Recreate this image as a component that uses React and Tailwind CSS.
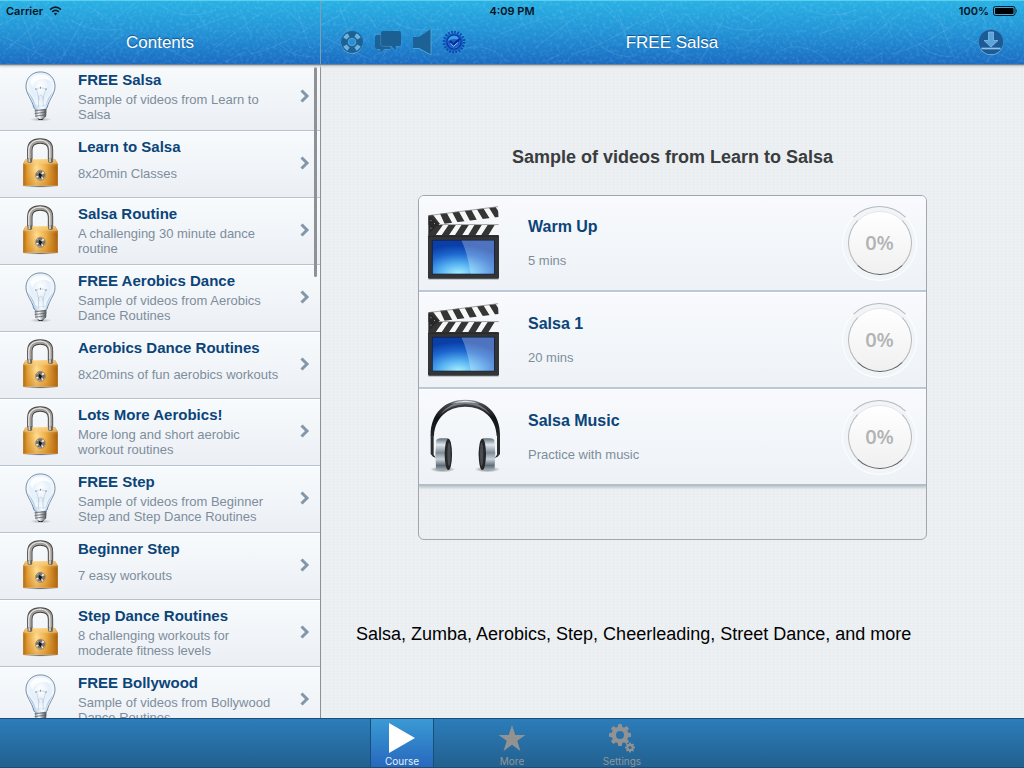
import React from "react";

const courses = [
  { title: "FREE Salsa", text: "Sample of videos from Learn to Salsa", free: true },
  { title: "Learn to Salsa", text: "8x20min Classes" },
  { title: "Salsa Routine", text: "A challenging 30 minute dance routine" },
  { title: "FREE Aerobics Dance", text: "Sample of videos from Aerobics Dance Routines", free: true },
  { title: "Aerobics Dance Routines", text: "8x20mins of fun aerobics workouts" },
  { title: "Lots More Aerobics!", text: "More long and short aerobic workout routines" },
  { title: "FREE Step", text: "Sample of videos from Beginner Step and Step Dance Routines", free: true },
  { title: "Beginner Step", text: "7 easy workouts" },
  { title: "Step Dance Routines", text: "8 challenging workouts for moderate fitness levels" },
  { title: "FREE Bollywood", text: "Sample of videos from Bollywood Dance Routines", free: true },
];

const lessons = [
  { title: "Warm Up", text: "5 mins", Icon: Clapper },
  { title: "Salsa 1", text: "20 mins", Icon: Clapper },
  { title: "Salsa Music", text: "Practice with music", Icon: Headphones },
];

function Defs() {
  return (
    <svg width="0" height="0" className="absolute" aria-hidden="true">
      <defs>
        <radialGradient id="glass" cx="50%" cy="38%" r="60%">
          <stop offset="0" stopColor="#ffffff" />
          <stop offset="0.5" stopColor="#e3effa" />
          <stop offset="0.8" stopColor="#f3f8fd" />
          <stop offset="1" stopColor="#a9c8e8" />
        </radialGradient>
        <linearGradient id="glassLow" x1="0" x2="1">
          <stop offset="0" stopColor="#6f9fd0" />
          <stop offset="0.35" stopColor="#cfe2f5" />
          <stop offset="0.6" stopColor="#ffffff" />
          <stop offset="1" stopColor="#6796c8" />
        </linearGradient>
        <linearGradient id="metal" x1="0" x2="1">
          <stop offset="0" stopColor="#8d9299" />
          <stop offset="0.35" stopColor="#ffffff" />
          <stop offset="0.6" stopColor="#b4b8bd" />
          <stop offset="1" stopColor="#44484d" />
        </linearGradient>
        <linearGradient id="brass" x1="0" x2="1">
          <stop offset="0" stopColor="#a8640f" />
          <stop offset="0.12" stopColor="#e09c35" />
          <stop offset="0.38" stopColor="#ffdf95" />
          <stop offset="0.65" stopColor="#eeb04a" />
          <stop offset="1" stopColor="#a45a08" />
        </linearGradient>
        <linearGradient id="brassShade" x1="0" x2="0" y1="0" y2="1">
          <stop offset="0" stopColor="#ffe3a0" stopOpacity="0.7" />
          <stop offset="0.3" stopColor="#e59a20" stopOpacity="0" />
          <stop offset="1" stopColor="#c47410" stopOpacity="0.45" />
        </linearGradient>
        <radialGradient id="screen" cx="42%" cy="100%" r="85%">
          <stop offset="0" stopColor="#a9f1ff" />
          <stop offset="0.35" stopColor="#58b4f2" />
          <stop offset="0.7" stopColor="#1e68d0" />
          <stop offset="1" stopColor="#0b3fa8" />
        </radialGradient>
        <linearGradient id="band" x1="0" x2="0" y1="0" y2="1">
          <stop offset="0" stopColor="#9da3a8" />
          <stop offset="0.12" stopColor="#42464a" />
          <stop offset="0.5" stopColor="#111213" />
          <stop offset="1" stopColor="#222426" />
        </linearGradient>
        <linearGradient id="cup" x1="0" x2="0" y1="0" y2="1">
          <stop offset="0" stopColor="#64707b" />
          <stop offset="0.2" stopColor="#dfe6ec" />
          <stop offset="0.45" stopColor="#7f8c98" />
          <stop offset="0.65" stopColor="#c7d1d9" />
          <stop offset="0.85" stopColor="#5f6c78" />
          <stop offset="1" stopColor="#a8b2ba" />
        </linearGradient>
        <radialGradient id="ground">
          <stop offset="0" stopColor="#3d4247" stopOpacity="0.8" />
          <stop offset="1" stopColor="#3d4247" stopOpacity="0" />
        </radialGradient>
        <clipPath id="slateTop">
          <path d="M40 74L250 48L252 79L76 101L70 103L40 103Z" />
        </clipPath>
        <clipPath id="slateBar">
          <path d="M40 103H252V134H40Z" />
        </clipPath>
        <filter id="grain" x="0" y="0" width="100%" height="100%">
          <feTurbulence type="fractalNoise" baseFrequency="0.3" numOctaves="3" seed="7" />
          <feColorMatrix values="0 0 0 0 0.75  0 0 0 0 0.95  0 0 0 0 1  1.6 0 0 0 -0.72" />
        </filter>
        <pattern id="scratches" width="320" height="66" patternUnits="userSpaceOnUse">
          <g fill="none" stroke="#c8f2ff" strokeWidth="0.7" opacity="0.17">
            <path d="M4 52L47 14L58 30M2 36Q30 50 52 60M20 8L34 48M60 62L84 18M71 20Q92 34 122 29M88 6L112 22L135 3M102 50L124 34M135 54Q160 36 189 62M160 5Q184 22 216 10M180 34L228 16M194 6L207 30M215 48L262 12M240 9L252 38M251 54Q280 48 318 22M264 25Q285 60 314 56M281 5L306 28M0 25Q20 18 31 2M28 60L48 38M225 62L244 52M298 13L310 48" />
          </g>
        </pattern>
      </defs>
    </svg>
  );
}

function Bulb() {
  return (
    <svg viewBox="70 12 100 156" className="h-[52px] w-[33px]" aria-hidden="true">
      <ellipse cx="121" cy="161" rx="34" ry="6" fill="url(#ground)" opacity="0.5" />
      <path d="M120 17C93 17 76 37 76 61C76 84 93 97 100 126Q102 132 120 132Q138 132 140 126C147 97 164 84 164 61C164 37 147 17 120 17Z" fill="url(#glass)" stroke="#5f7791" strokeWidth="2.5" />
      <path d="M80 73C90 92 98 102 103 127Q120 133 137 127C142 102 150 92 160 73C150 91 139 96 134 120H106C102 97 89 89 80 73Z" fill="url(#glassLow)" opacity="0.95" />
      <path d="M88 45Q98 22 124 25Q147 28 153 46Q138 35 121 39Q101 43 95 62Z" fill="#fff" opacity="0.85" />
      <path d="M107 70Q120 60 136 70M108 70L116 102M136 70L126 102M114 124V92Q120 84 128 92V124" fill="none" stroke="#b9c8d6" strokeWidth="2" />
      <path d="M106 66v6M120 62v6M137 66v6" stroke="#616b76" strokeWidth="2" />
      <path d="M103 130H138L137 152Q130 160 120 160Q110 160 104 152Z" fill="url(#metal)" />
      <path d="M102 135L138 131M102 143L138 139M104 151L137 147" stroke="#5c6268" strokeWidth="2.4" />
      <path d="M110 156Q120 165 131 156L126 163H115Z" fill="#272a2d" />
    </svg>
  );
}

function Lock() {
  return (
    <svg viewBox="66 216 110 150" className="h-[50px] w-[37px]" aria-hidden="true">
      <ellipse cx="121" cy="361" rx="54" ry="4" fill="url(#ground)" />
      <path d="M89 290V252Q89 225 120 225Q151 225 151 252V290" fill="none" stroke="#45423f" strokeWidth="16" />
      <path d="M89 290V252Q89 225 120 225Q151 225 151 252V290" fill="none" stroke="#a19d9a" strokeWidth="11" />
      <path d="M86 290V251Q88 224 120 222Q148 224 149 251V290" fill="none" stroke="#eeeeed" strokeWidth="3.5" />
      <path d="M76 280H165L173 293V359H69V293Z" fill="url(#brass)" />
      <path d="M76 280H165L173 293V359H69V293Z" fill="url(#brassShade)" />
      <path d="M76 281H165L172 293H70Z" fill="#f6cc7c" opacity="0.55" />
      <path d="M82 277H96V289Q89 293 82 289ZM144 277H158V289Q151 293 144 289Z" fill="#6b6259" />
      <path d="M85 277H90V289H85ZM147 277H152V289H147Z" fill="#d7d3cf" />
      <circle cx="121" cy="328" r="15" fill="#efe8df" stroke="#8b6b3c" strokeWidth="2" />
      <path d="M121 328L112 317Q121 311 128 316ZM121 328L134 321Q137 331 131 338ZM121 328L126 341Q115 343 110 336ZM121 328L107 331Q106 322 111 319Z" fill="#77736f" />
      <path d="M116 320L126 326L122 337L115 331Z" fill="#171513" />
    </svg>
  );
}

function Clapper() {
  return (
    <svg viewBox="36 46 220 226" className="h-[75px] w-[73px]" aria-hidden="true">
      <rect x="39" y="262" width="214" height="6" rx="3" fill="#8e9499" opacity="0.6" />
      <path d="M40 74L250 48L252 79L76 101L70 103L40 103Z" fill="#f7f7f7" />
      <g clipPath="url(#slateTop)" fill="#353535">
        <path d="M34 70L54 72L76 101L38 106ZM74 66L94 64L113 99L90 102ZM110 61L130 59L150 94L129 97ZM148 57L168 54L187 90L166 92ZM184 52L204 50L226 85L205 87ZM221 48L240 45L262 79L242 82Z" />
      </g>
      <path d="M40 103H252V134H40Z" fill="#f7f7f7" />
      <g clipPath="url(#slateBar)" fill="#353535">
        <path d="M60 103H84L62 134H38ZM101 103H123L102 134H80ZM140 103H162L142 134H120ZM179 103H201L182 134H160ZM219 103H240L221 134H199Z" />
      </g>
      <path d="M40 76L50 82L73 101L55 115L40 134Z" fill="#292929" />
      <path d="M47 90h2M58 99h2M47 113h2" stroke="#ddd" strokeWidth="3" />
      <path d="M40 75L250 48M74 102H252" stroke="#777" strokeWidth="2" />
      <rect x="39" y="134" width="214" height="131" rx="4" fill="#333436" />
      <path d="M40 136H252" stroke="#141414" strokeWidth="3" />
      <rect x="52" y="149" width="187" height="102" fill="url(#screen)" stroke="#111d38" strokeWidth="2" />
      <path d="M140 150H238V250H168Q158 188 140 150Z" fill="#fff" opacity="0.28" />
    </svg>
  );
}

function Headphones() {
  return (
    <svg viewBox="37 58 219 225" className="h-[75px] w-[73px] overflow-visible" aria-hidden="true">
      <ellipse cx="84" cy="266" rx="38" ry="9" fill="url(#ground)" />
      <ellipse cx="218" cy="266" rx="38" ry="9" fill="url(#ground)" />
      <path d="M48 165C47 96 92 57 152 57C212 57 257 96 256 165L246 166C244 113 206 78 152 78C98 78 60 113 58 166Z" fill="url(#band)" />
      <path d="M75 103Q105 64 152 62Q199 64 229 103Q199 72 152 70Q105 72 75 103Z" fill="#777d82" />
      <path d="M110 69Q152 51 194 69Q152 61 110 69Z" fill="#e1e5e8" />
      <path d="M48 162H57V222L64 232L55 228L48 220ZM247 162H256V220L249 228L240 232L247 222Z" fill="#2b2d2f" />
      <path d="M65 178Q68 173 78 173H99Q111 178 112 220Q111 264 99 269H75Q66 269 64 262Q60 220 65 178Z" fill="url(#cup)" />
      <path d="M239 178Q236 173 226 173H205Q193 178 192 220Q193 264 205 269H229Q238 269 240 262Q244 220 239 178Z" fill="url(#cup)" />
      <ellipse cx="101" cy="221" rx="11" ry="47" fill="#252628" />
      <ellipse cx="203" cy="221" rx="11" ry="47" fill="#252628" />
      <ellipse cx="103" cy="221" rx="5" ry="36" fill="#4b4e51" />
      <ellipse cx="201" cy="221" rx="5" ry="36" fill="#4b4e51" />
    </svg>
  );
}

function Chevron() {
  return (
    <svg viewBox="0 0 10 14" className="h-[14px] w-[10px] shrink-0" aria-hidden="true">
      <path d="M1.500 1.500L7 7L1.500 12.500" fill="none" stroke="#8397aa" strokeWidth="3" />
    </svg>
  );
}

function Wifi() {
  return (
    <svg viewBox="0 0 13 10" className="h-[10px] w-[13px]" aria-hidden="true">
      <path d="M1 3.600Q6.500 -1.200 12 3.600M3.100 5.900Q6.500 2.900 9.900 5.900" fill="none" stroke="#0a1a26" strokeWidth="1.600" />
      <path d="M4.800 7.500Q6.500 6 8.200 7.500L6.500 9.500Z" fill="#0a1a26" />
    </svg>
  );
}

function Battery() {
  return (
    <svg viewBox="0 0 25 10" className="h-[10px] w-[25px]" aria-hidden="true">
      <rect x="0.500" y="0.500" width="21.500" height="9" rx="2" fill="none" stroke="#0a1a26" />
      <rect x="2" y="2" width="18.500" height="6" rx="0.800" fill="#000" />
      <path d="M23.200 3Q24.800 5 23.200 7Z" fill="#0a1a26" />
    </svg>
  );
}

function LifeRing() {
  return (
    <svg viewBox="0 0 24 24" className="size-6" aria-hidden="true">
      <circle cx="12" cy="12.700" r="11" fill="#8cc8ee" opacity="0.6" />
      <circle cx="12" cy="12" r="11" fill="#1c6296" />
      <circle cx="12" cy="12" r="3.800" fill="#2b90d2" stroke="#7bbbe4" strokeWidth="0.600" />
      <g fill="#6fb4e0">
        {[45, 135, 225, 315].map((a) => (
          <path key={a} transform={`rotate(${a} 12 12)`} d="M9 2.600Q12 1.800 15 2.600L14 6.600Q12 6 10 6.600Z" />
        ))}
      </g>
    </svg>
  );
}

function Chat() {
  return (
    <svg viewBox="0 0 28 26" className="h-[26px] w-7" aria-hidden="true">
      <path d="M3 6H16V20H10L6 25V20H3Q1 20 1 18V8Q1 6 3 6Z" fill="#1c6296" />
      <path d="M9 2H25Q27 2 27 4V15Q27 17 25 17H22V22L17 17H9Q7 17 7 15V4Q7 2 9 2Z" fill="#1c5f93" />
      <path d="M6.700 6V15Q7 17.300 9 17.300H17L22 22.500V17.500H25M3 20.500H6V25L10 20.500H16" fill="none" stroke="#67b1e0" strokeWidth="0.500" opacity="0.7" />
    </svg>
  );
}

function Speaker() {
  return (
    <svg viewBox="0 0 20 28" className="h-7 w-5" aria-hidden="true">
      <path d="M1 9H7L19 1V27L7 20H1Z" fill="#1c6296" />
      <path d="M1 20.500H7L19 27V1" fill="none" stroke="#67b1e0" strokeWidth="0.700" />
    </svg>
  );
}

function Seal() {
  return (
    <svg viewBox="0 0 24 24" className="size-6" aria-hidden="true">
      <circle cx="12" cy="12" r="10" fill="none" stroke="#0c46b0" strokeWidth="2.600" strokeDasharray="1.600 1.540" />
      <circle cx="12" cy="12" r="9" fill="#1560c2" />
      <circle cx="12" cy="12" r="7" fill="#3aa0e6" stroke="#0a2f9a" strokeWidth="1.200" />
      <path d="M5.500 11Q12 7 18.500 11A6.500 6.500 0 0 1 5.500 12Z" fill="#1a5fcb" />
      <path d="M8 11L11.400 14.800L17.500 9" fill="none" stroke="#0a2a94" strokeWidth="2.400" />
      <path d="M8.600 13.200L11.400 16.400L15.800 12.600" fill="none" stroke="#8fd0fa" strokeWidth="1" />
    </svg>
  );
}

function Download() {
  return (
    <svg viewBox="0 0 26 28" className="h-7 w-[26px]" aria-hidden="true">
      <circle cx="13" cy="14.800" r="12.300" fill="#7cbbe8" />
      <circle cx="13" cy="14" r="12.300" fill="#1c5b96" />
      <path d="M10.500 4H15.500V12.500H20L13 19L6 12.500H10.500Z" fill="#5aa5dc" stroke="#8cc4ec" strokeWidth="0.700" />
      <path d="M3.500 20.500H22.500" stroke="#8cc4ec" strokeWidth="1.700" />
    </svg>
  );
}

function Gear({ cx, cy, r, hole }) {
  return (
    <g transform={`translate(${cx} ${cy})`}>
      <circle r={(r * 0.76 + hole) / 2} fill="none" stroke="#929292" strokeWidth={r * 0.76 - hole} />
      {[0, 45, 90, 135, 180, 225, 270, 315].map((a) => (
        <path key={a} transform={`rotate(${a})`} fill="#929292" d={`M${-r * 0.22} ${-r * 0.68}L${-r * 0.15} ${-r}H${r * 0.15}L${r * 0.22} ${-r * 0.68}Z`} />
      ))}
    </g>
  );
}

const iconButton = "flex items-center justify-center";

function Header() {
  return (
    <header className="relative z-10 h-16 shrink-0 bg-linear-to-b from-[#29b2e4] via-[#2393d6] to-[#1b6cc2] shadow-[0_1px_0_#77848f,0_2px_0_#b9c0c6,0_3px_2px_#d3d8dc]">
      <svg className="absolute inset-0 h-full w-full" aria-hidden="true">
        <rect width="100%" height="100%" fill="url(#scratches)" />
        <rect width="100%" height="100%" filter="url(#grain)" opacity="0.2" />
      </svg>
      <div className="absolute inset-y-0 left-80 w-px bg-[#7d9db4]" />
      <div className="absolute inset-x-0 top-0 h-px bg-[#5dcdf0]" />
      <div className="relative grid h-[22px] grid-cols-3 items-center px-[6px] font-['Inter',sans-serif] text-[11px] font-semibold text-[#06141f]">
        <div className="flex items-center gap-[6px]">
          <span>Carrier</span>
          <Wifi />
        </div>
        <div className="text-center">4:09 PM</div>
        <div className="flex items-center justify-end gap-1">
          <span>100%</span>
          <Battery />
        </div>
      </div>
      <div className="relative flex h-10 items-center text-[17px] text-white [text-shadow:0_-1px_1px_rgba(0,40,90,0.6)]">
        <h2 className="w-80 shrink-0 pt-[2px] text-center">Contents</h2>
        <div className="grid flex-1 grid-cols-[1fr_auto_1fr] items-center pr-5 pl-5">
          <div className="flex items-center gap-[10px] pb-px">
            <button type="button" aria-label="Help" className={iconButton}><LifeRing /></button>
            <button type="button" aria-label="Messages" className={iconButton}><Chat /></button>
            <button type="button" aria-label="Sound" className={iconButton}><Speaker /></button>
            <button type="button" aria-label="Verified" className={iconButton}><Seal /></button>
          </div>
          <h1 className="pt-[2px]">FREE Salsa</h1>
          <div className="flex justify-end">
            <button type="button" aria-label="Download" className={iconButton}><Download /></button>
          </div>
        </div>
      </div>
    </header>
  );
}

function Sidebar() {
  return (
    <nav aria-label="Contents" className="relative w-80 shrink-0 overflow-hidden">
      <ul>
        {courses.map((c) => (
          <li key={c.title} className="h-[67px] border-b border-[#b4c3ce] bg-linear-to-b from-[#f8fbfd] to-[#ebeff4]">
            <a href="#course" className="flex h-full items-center border-t border-white pr-[10px] pb-[3px]">
              <span className="flex w-[78px] shrink-0 justify-center pl-[2px]">{c.free ? <Bulb /> : <Lock />}</span>
              <span className="flex min-w-0 flex-1 flex-col gap-px">
                <span className="h-5 text-[15px] leading-5 font-bold text-[#0b4479]">{c.title}</span>
                <span className="flex h-8 max-w-[204px] items-center text-[13px] leading-[15px] text-[#7e8d9c]">{c.text}</span>
              </span>
              <Chevron />
            </a>
          </li>
        ))}
      </ul>
      <div className="absolute top-[3px] right-[3px] h-[210px] w-[3px] rounded-full bg-[#8e9297]" />
    </nav>
  );
}

function Lesson({ title, text, Icon }) {
  return (
    <li className="h-[97px] border-b-2 border-[#b9cad6] bg-linear-to-b from-[#f8fafd] to-[#eef2f6] last:border-[#b3bfc8] last:shadow-[0_2px_2px_#c5cbd0]">
      <a href="#lesson" className="flex h-full items-center border-t border-white pr-[9px] pl-2">
        <Icon />
        <span className="ml-7 flex min-w-0 flex-1 flex-col gap-[14px] pt-[2px]">
          <span className="text-[16px] leading-5 font-bold text-[#0b4479]">{title}</span>
          <span className="text-[13px] leading-5 text-[#7e8d9c]">{text}</span>
        </span>
        <span className="flex size-[75px] items-center justify-center rounded-full border border-[#fdfefe] border-t-[#b4b9be] bg-[#f2f5f8]">
          <span className="flex size-16 items-center justify-center rounded-full border border-[#b5b8bb] border-t-[#e3e5e7] border-b-[#5b5d60] bg-linear-to-b from-white to-[#f0f0f1] font-['Open_Sans',sans-serif] text-[20px] font-semibold text-[#b1b2b4]">
            0%
          </span>
        </span>
      </a>
    </li>
  );
}

function TabBar() {
  const tab = "flex h-full w-[62px] flex-col items-center justify-end text-[10px] leading-3";
  return (
    <footer className="relative z-10 flex h-[50px] shrink-0 justify-center gap-12 border-y border-[#174f78] bg-linear-to-b from-[#2c7dba] to-[#22608f] font-['Inter',sans-serif]">
      <button type="button" className={`${tab} bg-linear-to-b from-[#3b9ad4] to-[#2868bd] text-[#e6f1fb] shadow-[0_0_0_1px_#174f78]`}>
        <svg viewBox="0 0 36 36" className="size-9" aria-hidden="true">
          <path d="M5 4L31 19L5 34Z" fill="#fff" />
        </svg>
        Course
      </button>
      <button type="button" className={`${tab} text-[#929699]`}>
        <svg viewBox="0 0 36 36" className="size-9" aria-hidden="true">
          <path d="M18 6L21.300 16H31.500L23.300 21.800L26.400 32L18 25.800L9.600 32L12.700 21.800L4.500 16H14.700Z" fill="#929292" />
        </svg>
        More
      </button>
      <button type="button" className={`${tab} text-[#929699]`}>
        <svg viewBox="0 0 36 36" className="size-9" aria-hidden="true">
          <Gear cx={16} cy={16} r={11} hole={4} />
          <Gear cx={26} cy={28.500} r={5} hole={1.600} />
        </svg>
        Settings
      </button>
    </footer>
  );
}

export default function App() {
  return (
    <div className="flex h-screen flex-col overflow-hidden bg-[#ebeff2] font-['Liberation_Sans',Arial,sans-serif]">
      <Defs />
      <Header />
      <div className="flex min-h-0 flex-1">
        <Sidebar />
        <main className="flex-1 overflow-hidden border-l border-[#8c9298] bg-[repeating-linear-gradient(0deg,rgba(255,255,255,0.15)_0_1px,transparent_1px_3px),repeating-linear-gradient(90deg,rgba(190,202,212,0.08)_0_1px,transparent_1px_4px)] px-[35px] pt-20">
          <h2 className="text-center text-[18px] leading-[26px] font-bold text-[#3a3c3e]">Sample of videos from Learn to Salsa</h2>
          <section className="mx-auto mt-[25px] max-w-[509px] overflow-hidden rounded-md border border-[#a2a7ac] pb-[53px]">
            <ul className="-mt-px">
              {lessons.map((l) => (
                <Lesson key={l.title} {...l} />
              ))}
            </ul>
          </section>
          <p className="mt-20 text-[18px] leading-7 text-black">Salsa, Zumba, Aerobics, Step, Cheerleading, Street Dance, and more</p>
        </main>
      </div>
      <TabBar />
    </div>
  );
}
